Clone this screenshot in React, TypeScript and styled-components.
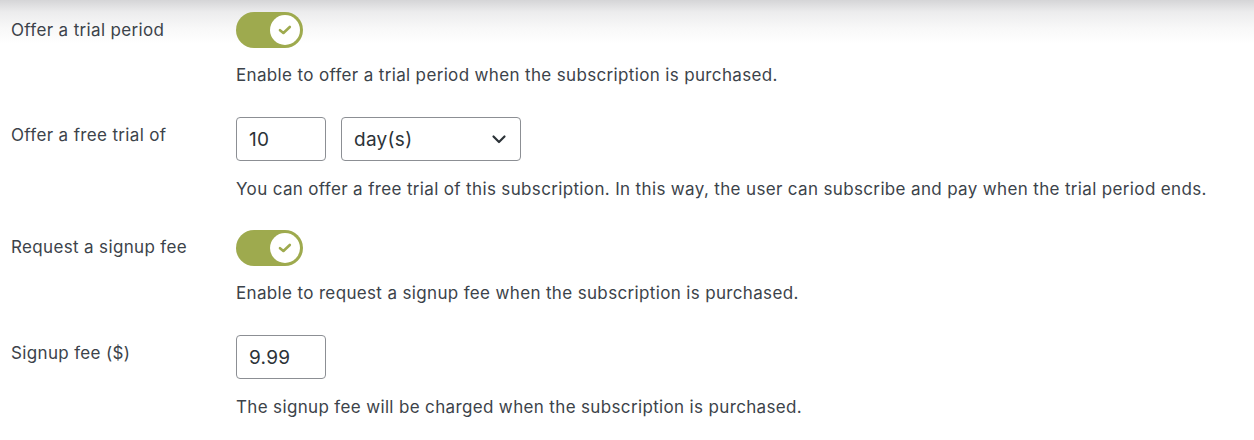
import React from "react";
import styled, { createGlobalStyle } from "styled-components";

const Global = createGlobalStyle`
  html, body { margin: 0; padding: 0; background: #fff; }
  body { font-family: Inter, "Noto Sans", sans-serif; }
`;

const Page = styled.div`
  width: 1254px;
  height: 440px;
  box-sizing: border-box;
  padding: 12px 0 0 11px;
  background: linear-gradient(#d5d5d7 0px, #ececed 12px, #f8f8f8 28px, #fff 44px);
  color: #3c434a;
  font-size: 17px;
  letter-spacing: 0.35px;
  display: flex;
  flex-direction: column;
`;

const Row = styled.div<{ $h: number }>`
  display: grid;
  grid-template-columns: 225px 1fr;
  height: ${(p) => p.$h}px;
`;

const Label = styled.div<{ $top: number }>`
  padding-top: ${(p) => p.$top}px;
  line-height: 24px;
`;

const Field = styled.div`
  display: flex;
  flex-direction: column;
  align-items: flex-start;
`;

const Controls = styled.div`
  display: flex;
  gap: 15px;
`;

const Desc = styled.div<{ $top: number }>`
  margin-top: ${(p) => p.$top}px;
  line-height: 24px;
`;

const Toggle = styled.div`
  width: 67px;
  height: 36px;
  border-radius: 18px;
  background: #9eaa4e;
  box-sizing: border-box;
  padding: 3px;
  display: flex;
  justify-content: flex-end;
`;

const Knob = styled.div`
  width: 30px;
  height: 30px;
  border-radius: 50%;
  background: #fff;
  display: flex;
  align-items: center;
  justify-content: center;
`;

const Input = styled.div<{ $w: number }>`
  width: ${(p) => p.$w}px;
  height: 44px;
  box-sizing: border-box;
  border: 1px solid #8c8f94;
  border-radius: 4px;
  background: #fff;
  display: flex;
  align-items: center;
  justify-content: space-between;
  padding: 0 12px 0 12px;
  font-size: 19px;
  letter-spacing: 0.3px;
  color: #2c3338;
`;

const Check = () => (
  <svg width="16" height="16" viewBox="0 0 16 16">
    <path d="M3 8.2 L6.4 11 L12.8 5" fill="none" stroke="#9eaa4e" strokeWidth="2.6" strokeLinecap="round" strokeLinejoin="round" />
  </svg>
);

const Chevron = () => (
  <svg width="18" height="18" viewBox="0 0 18 18">
    <path d="M3.5 6.5 L9 12 L14.5 6.5" fill="none" stroke="#2c3338" strokeWidth="2.2" strokeLinecap="round" strokeLinejoin="round" />
  </svg>
);

const Switch = () => (
  <Toggle>
    <Knob>
      <Check />
    </Knob>
  </Toggle>
);

export default function App() {
  return (
    <>
      <Global />
      <Page>
        <Row $h={105}>
          <Label $top={6}>Offer a trial period</Label>
          <Field>
            <Switch />
            <Desc $top={15}>Enable to offer a trial period when the subscription is purchased.</Desc>
          </Field>
        </Row>
        <Row $h={113}>
          <Label $top={6}>Offer a free trial of</Label>
          <Field>
            <Controls>
              <Input $w={90}>10</Input>
              <Input $w={180}>
                day(s)
                <Chevron />
              </Input>
            </Controls>
            <Desc $top={16}>
              You can offer a free trial of this subscription. In this way, the user can subscribe and pay when the trial period ends.
            </Desc>
          </Field>
        </Row>
        <Row $h={105}>
          <Label $top={5}>Request a signup fee</Label>
          <Field>
            <Switch />
            <Desc $top={15}>Enable to request a signup fee when the subscription is purchased.</Desc>
          </Field>
        </Row>
        <Row $h={105}>
          <Label $top={6}>Signup fee ($)</Label>
          <Field>
            <Input $w={90}>9.99</Input>
            <Desc $top={16}>The signup fee will be charged when the subscription is purchased.</Desc>
          </Field>
        </Row>
      </Page>
    </>
  );
}
